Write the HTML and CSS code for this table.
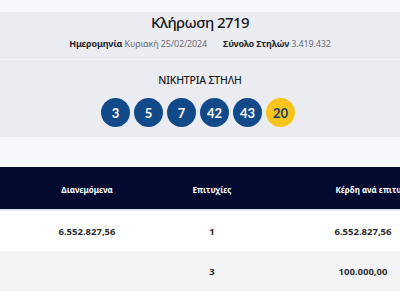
FILE: index.html
```html
<!DOCTYPE html>
<html lang="el">
<head>
<meta charset="utf-8">
<link rel="stylesheet" href="styles.css">
</head>
<body>
<div class="page">
  <div class="topstrip"></div>
  <section class="info">
    <h1 class="title">Κλήρωση 2719</h1>
    <p class="meta"><span class="pair"><b>Ημερομηνία</b> Κυριακή 25/02/2024</span><span class="pair"><b>Σύνολο Στηλών</b> 3.419.432</span></p>
  </section>
  <section class="winning">
    <h2 class="wtitle">ΝΙΚΗΤΡΙΑ ΣΤΗΛΗ</h2>
    <div class="balls">
      <span class="ball">3</span>
      <span class="ball">5</span>
      <span class="ball">7</span>
      <span class="ball">42</span>
      <span class="ball">43</span>
      <span class="ball joker">20</span>
    </div>
  </section>
  <div class="spacer"></div>
  <div class="table">
    <div class="row head">
      <div class="cell">Διανεμόμενα</div>
      <div class="cell">Επιτυχίες</div>
      <div class="cell wide">Κέρδη ανά επιτυχία</div>
    </div>
    <div class="row">
      <div class="cell">6.552.827,56</div>
      <div class="cell">1</div>
      <div class="cell">6.552.827,56</div>
    </div>
    <div class="row alt">
      <div class="cell"></div>
      <div class="cell">3</div>
      <div class="cell">100.000,00</div>
    </div>
  </div>
</div>
</body>
</html>
```
FILE: styles.css
```css
html, body {
  margin: 0;
  padding: 0;
  background: #ffffff;
}
body {
  width: 400px;
  height: 300px;
  overflow: hidden;
  font-family: "Noto Sans", "DejaVu Sans", sans-serif;
  color: #1b1b1f;
}
.page {
  display: flex;
  flex-direction: column;
}
.topstrip {
  height: 12px;
  background: #f6f7fa;
}
.info {
  background: #ebecf2;
  border-bottom: 1px solid #f2f3f7;
  padding: 0 0 8px;
  text-align: center;
}
.title {
  margin: 0;
  font-size: 15px;
  line-height: 20px;
  font-weight: 500;
  letter-spacing: -0.6px;
  color: #16161a;
}
.meta {
  margin: 5px 0 0;
  font-size: 9px;
  line-height: 14px;
  letter-spacing: -0.15px;
  color: #6b6d75;
  display: flex;
  justify-content: center;
  gap: 16px;
}
.meta b {
  color: #24252a;
  font-weight: 700;
}
.winning {
  background: #ebecf2;
  padding: 12px 0 10px;
  text-align: center;
}
.wtitle {
  margin: 0;
  font-size: 10.5px;
  line-height: 16px;
  font-weight: 500;
  letter-spacing: -0.2px;
  color: #1b1b1f;
}
.balls {
  margin-top: 10px;
  display: flex;
  justify-content: center;
  gap: 4px;
  padding-right: 4px;
}
.ball {
  width: 29px;
  height: 29px;
  border-radius: 50%;
  background: #124a89;
  color: #ffffff;
  font-family: "Lato", "Noto Sans", sans-serif;
  font-size: 13px;
  font-weight: 700;
  display: flex;
  align-items: center;
  justify-content: center;
}
.ball.joker {
  background: #f9c41c;
  color: #1e3a6b;
}
.spacer {
  height: 29px;
  background: #f6f7fa;
  border-bottom: 1px solid #ffffff;
}
.table {
  display: flex;
  flex-direction: column;
}
.row {
  display: grid;
  grid-template-columns: 174px 76px 226px;
  height: 40px;
  align-items: center;
  font-size: 9.5px;
  font-weight: 700;
  color: #2b2c31;
  white-space: nowrap;
  padding-top: 1px;
  box-sizing: border-box;
}
.row .cell {
  text-align: center;
}
.row.head {
  height: 44px;
  background: #030a2f;
  color: #ffffff;
  font-size: 8px;
  padding-top: 2px;
  border-bottom: 2px solid #e4e6ee;
}
.row.head .wide {
  padding-left: 24px;
}
.row.alt {
  background: #f4f4f6;
}
```
